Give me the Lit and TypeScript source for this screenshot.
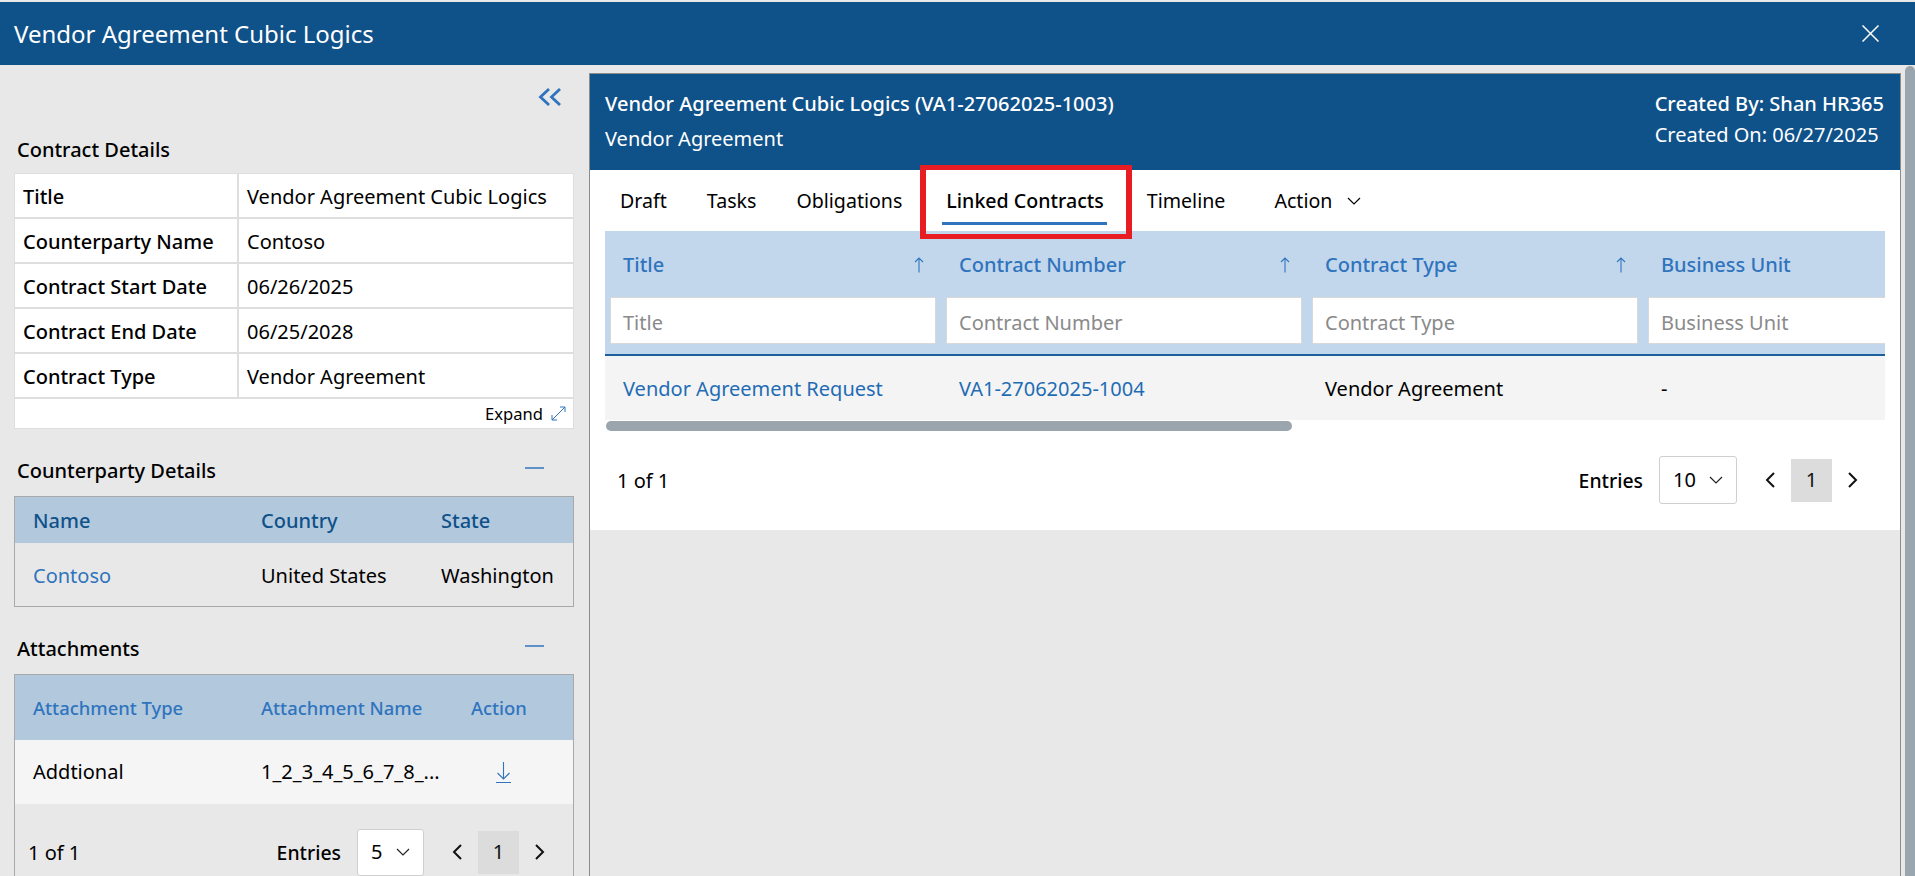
import { LitElement, html, css, svg } from "lit";
import { customElement } from "lit/decorators.js";

const chevDown = svg`<path d="M1 1l6 6 6-6" fill="none" stroke="currentColor" stroke-width="1.2"/>`;
const arrowUp = html`<svg class="sort" viewBox="0 0 10 16"><path d="M5 15.5V1M1 5l4-4 4 4" fill="none" stroke="currentColor" stroke-width="1.1"/></svg>`;
const minus = html`<svg class="minus" viewBox="0 0 19 2"><path d="M0 1h19" stroke="currentColor" stroke-width="1.5"/></svg>`;

function pager(total: string, size: string, small: boolean) {
  return html`<div class="pager ${small ? "small" : ""}">
    <span class="count">${total}</span>
    <span class="grow"></span>
    <span class="entries">Entries</span>
    <span class="select"><span>${size}</span><svg class="chev" viewBox="0 0 14 8">${chevDown}</svg></span>
    <svg class="nav" viewBox="0 0 10 16"><path d="M9 1L2 8l7 7" fill="none" stroke="currentColor" stroke-width="2"/></svg>
    <span class="page">1</span>
    <svg class="nav" viewBox="0 0 10 16"><path d="M1 1l7 7-7 7" fill="none" stroke="currentColor" stroke-width="2"/></svg>
  </div>`;
}

@customElement("app-root")
export class AppRoot extends LitElement {
  static styles = css`
    :host { display: block; height: 876px; overflow: hidden; background: #e8e8e8; color: #000;
      font-family: "Noto Sans", "Liberation Sans", sans-serif; font-size: 20px; line-height: 24px; }
    * { box-sizing: border-box; }
    .top { margin-top: 2px; height: 63px; background: #0f5189; color: #fff; display: flex; align-items: center;
      justify-content: space-between; padding: 0 36px 0 14px; }
    .top h1 { margin: 0; font-size: 24px; font-weight: 400; line-height: 30px; }
    .x { width: 17px; height: 17px; color: #fff; }
    .main { display: flex; height: 811px; }
    aside { width: 589px; flex: none; padding: 0 15px 0 14px; }
    .collapse { display: flex; justify-content: flex-end; height: 73px; padding: 23px 13px 0 0; color: #2f74bd; }
    .collapse svg { width: 23px; height: 18px; }
    .shead { display: flex; justify-content: space-between; align-items: center; height: 24px; padding: 0 30px 0 3px; color: #000; }
    .shead h2 { margin: 0; font-size: 20px; font-weight: 500; }
    .shead.gap { margin-top: 30px; }
    .minus { width: 19px; height: 2px; color: #2f74bd; margin-top: -6px; }
    .details { margin-top: 11px; display: grid; grid-template-columns: 222px 1fr; gap: 2px; background: #dedede; border: 1px solid #dedede; }
    .details > div { background: #fff; height: 43px; padding: 2px 8px 0; display: flex; align-items: center; }
    .details .k { font-weight: 500; }
    .details .expand { grid-column: 1 / 3; height: 29px; justify-content: flex-end; font-size: 16.6px; gap: 8px; padding: 0 7px 0 0; }
    .expand svg { width: 15px; height: 15px; color: #2f74bd; }
    .cp { margin: 13px 0 30px; border: 1px solid #a9a9a9; }
    .cp .row { display: grid; grid-template-columns: 227px 180px 1fr; padding: 1px 0 0 18px; align-items: center; }
    .cp .row span:not(:first-child) { padding-left: 1px; }
    .cp .row.h { height: 46px; background: #b2c8dd; color: #0f5189; font-weight: 500; }
    .cp .row.b { height: 63px; padding-top: 2px; }
    .link { color: #2f74bd; }
    .att { margin-top: 13px; border: 1px solid #a9a9a9; border-bottom: 0; height: 220px; }
    .att .row { display: grid; grid-template-columns: 227px 210px 1fr; padding-left: 18px; align-items: center; white-space: nowrap; }
    .att .row span:not(:first-child) { padding-left: 1px; }
    .att .row.h { height: 65px; background: #b2c8dd; color: #2f74bd; font-weight: 500; font-size: 18.4px; }
    .att .row.b { height: 64px; background: #f5f5f5; }
    .dl { width: 15px; height: 21px; color: #2f74bd; margin-left: 26px; display: block; }
    .pager { display: flex; align-items: center; height: 48px; }
    .pager .grow { flex: 1; }
    .pager .count { padding-top: 2px; }
    .pager .entries { font-weight: 500; font-size: 19.4px; padding-top: 2px; margin-right: 16px; }
    .pager .select { width: 78px; height: 48px; background: #fff; border: 1px solid #cfcfcf; border-radius: 3px;
      display: flex; align-items: center; justify-content: space-between; padding: 0 13px; margin-right: 28px; }
    .pager .chev { width: 14px; height: 8px; color: #222; }
    .pager .nav { width: 10px; height: 16px; color: #111; }
    .pager .page { width: 41px; height: 43px; background: #dcdcdc; color: #111; display: flex; align-items: center; justify-content: center; margin: 0 16px; }
    .att .pager { margin: 24px 28px 0 13px; }
    .pager.small .select { width: 67px; height: 47px; }
    .panel { flex: 1; margin: 8px 4px 0 0; border: 1px solid #8c8c8c; border-bottom: 0; min-width: 0; }
    .phead { height: 96px; background: #0f5189; color: #fff; display: flex; justify-content: space-between; padding: 18px 16px 0 15px; }
    .phead .t { font-weight: 500; }
    .phead .l2 { margin-top: 11px; }
    .phead .r .l2 { margin-top: 7px; }
    .white { background: #fff; height: 360px; }
    .tabs { height: 61px; display: flex; align-items: center; padding-left: 30px; font-size: 19.6px; }
    .tab { position: relative; margin-right: 40px; white-space: nowrap; }
    .tab.on { font-weight: 500; margin: 0 43px 0 4px; z-index: 1; }
    .tab.on::after { content: ""; position: absolute; left: -4px; right: -3px; bottom: -12px; height: 3px; background: #2f74bd; }
    .tab.on .mark { position: absolute; left: -26px; right: -28px; top: -24px; bottom: -26px; border: solid #e81c23; border-width: 5px 6px; }
    .tab.act { display: flex; align-items: center; gap: 15px; margin: 0 0 0 9px; }
    .tab.act svg { width: 14px; height: 8px; }
    .scroller { margin: 0 15px; overflow: hidden; position: relative; height: 200px; }
    .grid { display: grid; grid-template-columns: 336px 366px 336px 400px; width: 1438px; }
    .hc { background: #c3d7ec; height: 66px; padding: 2px 18px 0; display: flex; justify-content: space-between; align-items: center; color: #2f74bd; font-weight: 500; }
    .hc .sort { width: 10px; height: 16px; margin-right: -1px; }
    .fc { background: #c3d7ec; height: 59px; padding: 0 5px 12px; border-bottom: 2px solid #1c5f9c; }
    .fc .inp { height: 47px; background: #fff; border: 1px solid #d8d8d8; display: flex; align-items: center; padding: 4px 0 0 12px; color: #8a8a8a; }
    .bc { background: #f4f4f4; height: 64px; padding: 1px 18px 0; display: flex; align-items: center; }
    .bc.link { color: #1f6cb5; }
    .hbar { position: absolute; left: 1px; top: 190px; width: 686px; height: 10px; border-radius: 5px; background: #9aa5ad; }
    .pwrap { padding: 25px 42px 0 15px; }
    .pwrap .pager { padding-left: 12px; }
    .vbar { width: 10px; flex: none; margin-top: 1px; border-radius: 5px 5px 0 0; background: #9aa5ad; }
  `;

  render() {
    return html`
      <div class="top">
        <h1>Vendor Agreement Cubic Logics</h1>
        <svg class="x" viewBox="0 0 17 17"><path d="M.5.5l16 16M16.5.5l-16 16" stroke="currentColor" stroke-width="1.5" fill="none"/></svg>
      </div>
      <div class="main">
        <aside>
          <div class="collapse"><svg viewBox="0 0 23 18"><path d="M11 1L2.5 9l8.5 8M22 1l-8.500 8 8.500 8" fill="none" stroke="currentColor" stroke-width="2.8"/></svg></div>
          <div class="shead"><h2>Contract Details</h2></div>
          <div class="details">
            <div class="k">Title</div><div>Vendor Agreement Cubic Logics</div>
            <div class="k">Counterparty Name</div><div>Contoso</div>
            <div class="k">Contract Start Date</div><div>06/26/2025</div>
            <div class="k">Contract End Date</div><div>06/25/2028</div>
            <div class="k">Contract Type</div><div>Vendor Agreement</div>
            <div class="expand">Expand <svg viewBox="0 0 15 15"><path d="M9 1h5v5M14 1L1 14M1 9v5h5" fill="none" stroke="currentColor" stroke-width="1"/></svg></div>
          </div>
          <div class="shead gap"><h2>Counterparty Details</h2>${minus}</div>
          <div class="cp">
            <div class="row h"><span>Name</span><span>Country</span><span>State</span></div>
            <div class="row b"><span class="link">Contoso</span><span>United States</span><span>Washington</span></div>
          </div>
          <div class="shead"><h2>Attachments</h2>${minus}</div>
          <div class="att">
            <div class="row h"><span>Attachment Type</span><span>Attachment Name</span><span>Action</span></div>
            <div class="row b"><span>Addtional</span><span>1_2_3_4_5_6_7_8_...</span>
              <svg class="dl" viewBox="0 0 15 21"><path d="M7.500 0v17M1.500 11l6 6 6-6M0 20.500h15" fill="none" stroke="currentColor" stroke-width="1.1"/></svg></div>
            ${pager("1 of 1", "5", true)}
          </div>
        </aside>
        <section class="panel">
          <div class="phead">
            <div><div class="t">Vendor Agreement Cubic Logics (VA1-27062025-1003)</div><div class="l2">Vendor Agreement</div></div>
            <div class="r"><div class="t">Created By: Shan HR365</div><div class="l2">Created On: 06/27/2025</div></div>
          </div>
          <div class="white">
            <div class="tabs">
              <span class="tab">Draft</span><span class="tab">Tasks</span><span class="tab">Obligations</span>
              <span class="tab on">Linked Contracts<span class="mark"></span></span>
              <span class="tab">Timeline</span>
              <span class="tab act">Action <svg viewBox="0 0 14 8">${chevDown}</svg></span>
            </div>
            <div class="scroller">
              <div class="grid">
                <div class="hc"><span>Title</span>${arrowUp}</div>
                <div class="hc"><span>Contract Number</span>${arrowUp}</div>
                <div class="hc"><span>Contract Type</span>${arrowUp}</div>
                <div class="hc"><span>Business Unit</span></div>
                <div class="fc"><div class="inp">Title</div></div>
                <div class="fc"><div class="inp">Contract Number</div></div>
                <div class="fc"><div class="inp">Contract Type</div></div>
                <div class="fc"><div class="inp">Business Unit</div></div>
                <div class="bc link">Vendor Agreement Request</div>
                <div class="bc link">VA1-27062025-1004</div>
                <div class="bc">Vendor Agreement</div>
                <div class="bc">-</div>
              </div>
              <div class="hbar"></div>
            </div>
            <div class="pwrap">${pager("1 of 1", "10", false)}</div>
          </div>
        </section>
        <div class="vbar"></div>
      </div>
    `;
  }
}
